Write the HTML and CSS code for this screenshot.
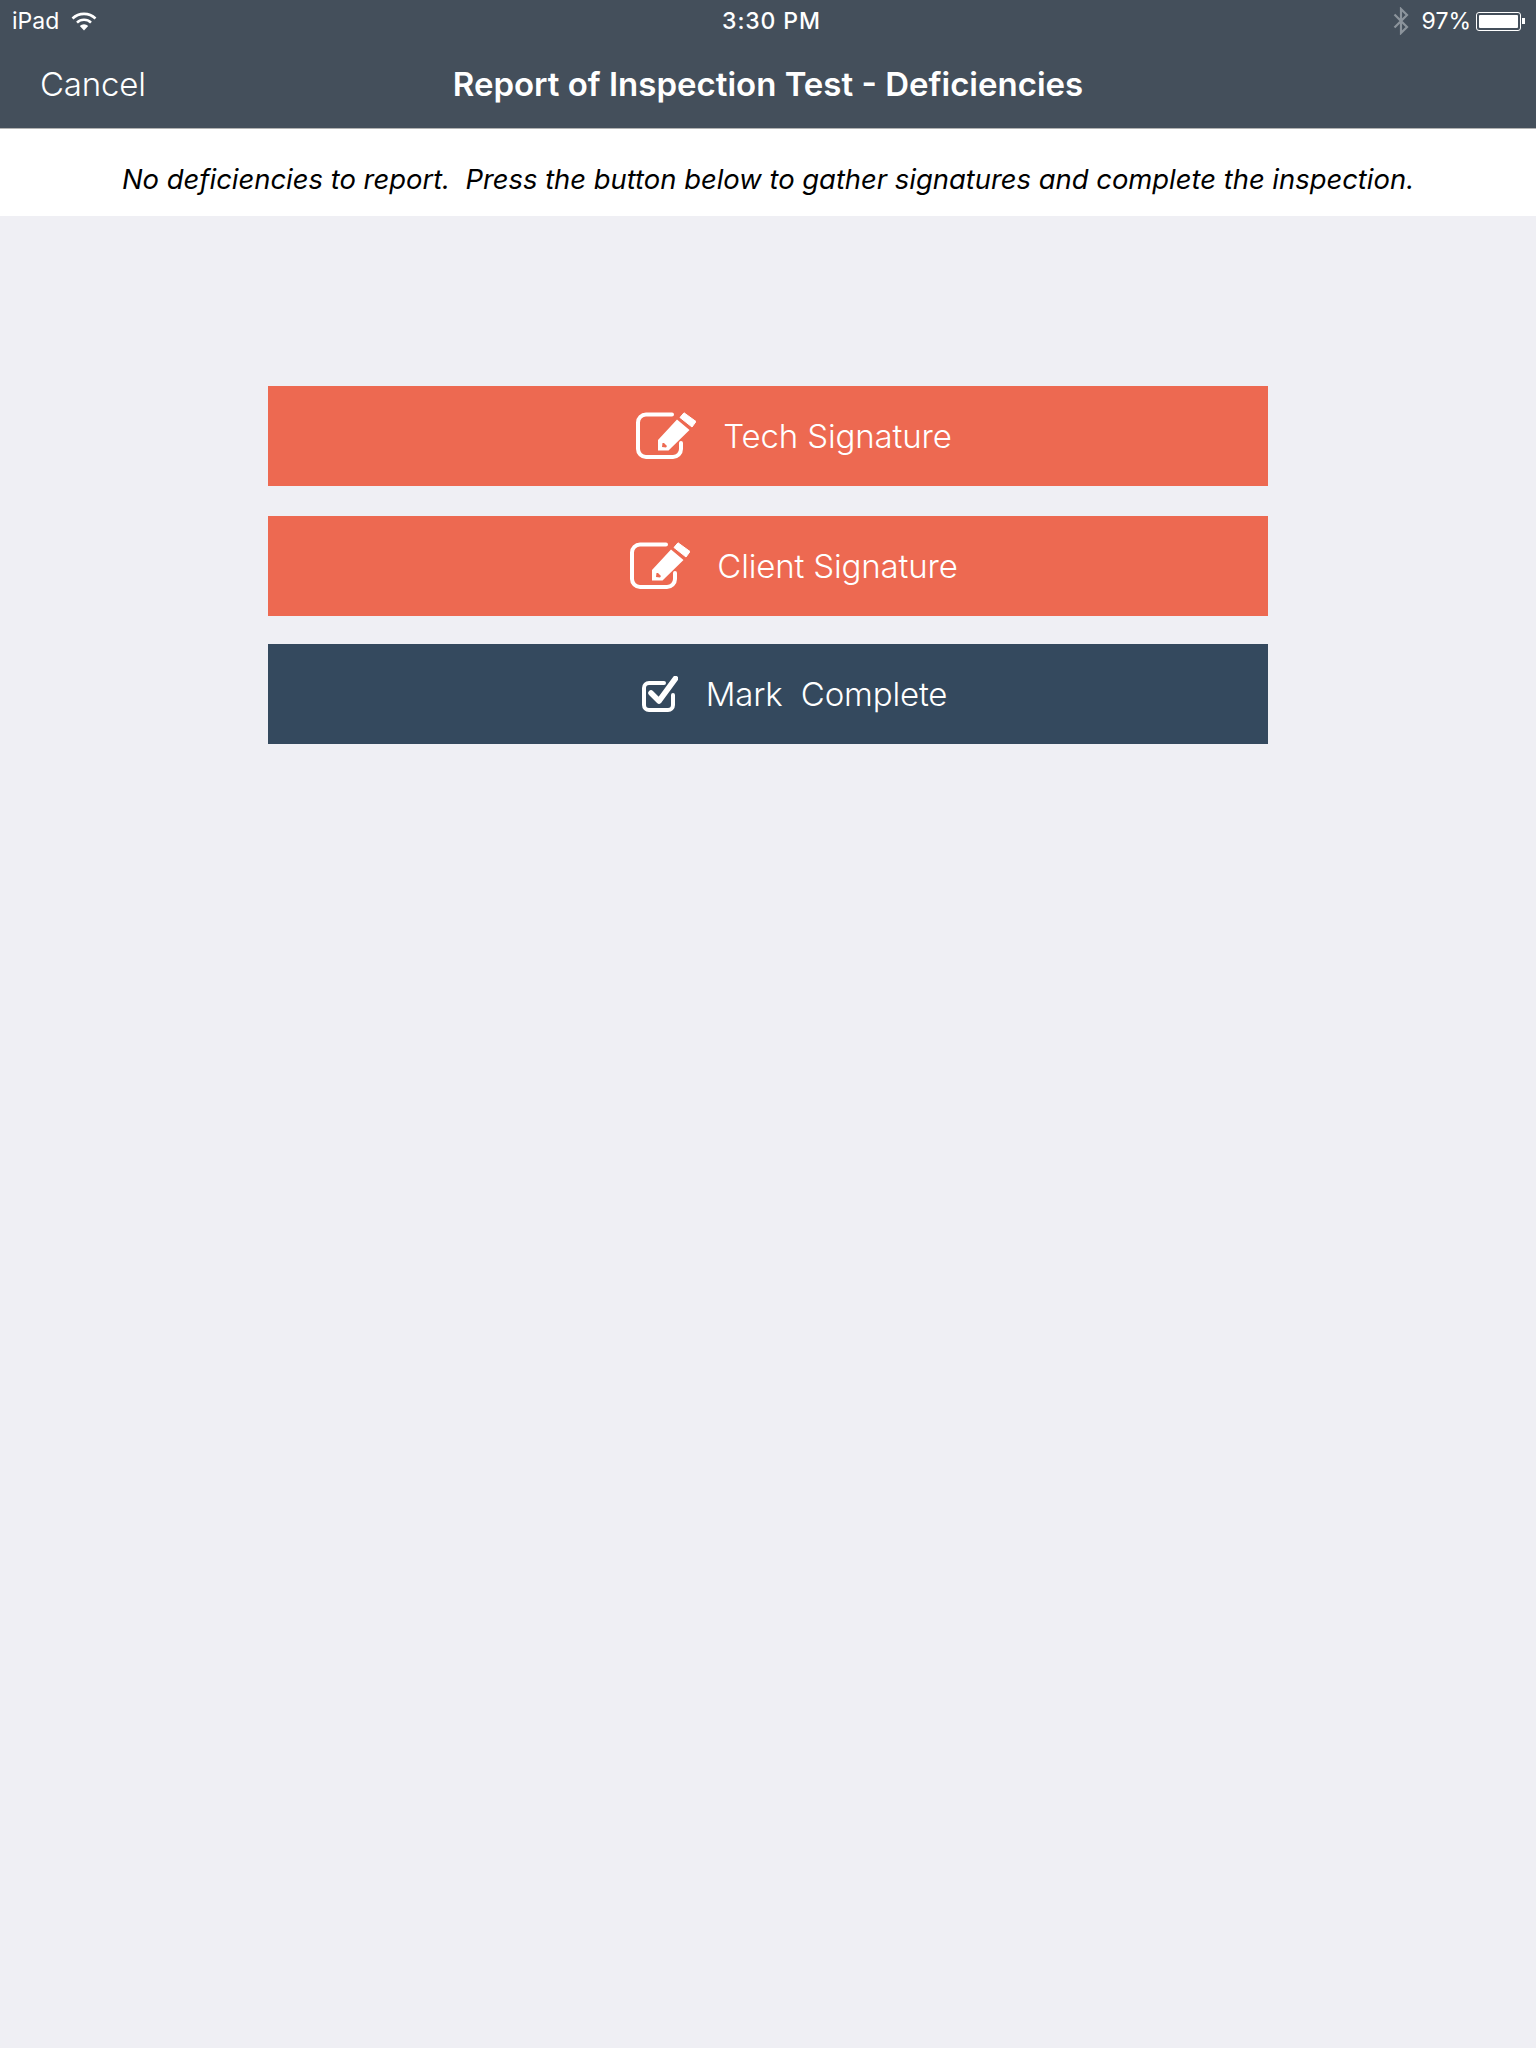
FILE: index.html
```html
<!DOCTYPE html>
<html>
<head>
<title>Report of Inspection Test - Deficiencies</title>
<link rel="stylesheet" href="styles.css">
</head>
<body>

<header class="topbar">
  <div class="status">
    <div class="status-left">
      <span>iPad</span>
      <svg class="wifi" width="26" height="20" viewBox="0 0 26 20">
        <path d="M1.500 7.500a16.500 16.500 0 0 1 23 0" fill="none" stroke="#fff" stroke-width="2.600"/>
        <path d="M6 11.600a10.200 10.200 0 0 1 14 0" fill="none" stroke="#fff" stroke-width="2.600"/>
        <path d="M8.800 15a6 6 0 0 1 8.400 0L13 19.500z" fill="#fff"/>
      </svg>
    </div>
    <div class="status-time">3:30 PM</div>
    <div class="status-right">
      <svg class="bluetooth" width="16" height="28" viewBox="0 0 16 28">
        <path d="M1.500 7.500L14 20 8 26V2l6 6L1.500 20.500" fill="none" stroke="#8c949c" stroke-width="2.200"/>
      </svg>
      <span class="battery-pct">97%</span>
      <div class="battery"><div class="battery-fill"></div></div>
      <div class="battery-cap"></div>
    </div>
  </div>
  <nav class="navbar">
    <a class="nav-cancel">Cancel</a>
    <h1 class="nav-title">Report of Inspection Test - Deficiencies</h1>
  </nav>
</header>

<p class="notice">No deficiencies to report.&nbsp; Press the button below to gather signatures and complete the inspection.</p>

<main class="actions">
  <button type="button" class="action action-sign action-tech">
    <svg class="icon-edit" width="60" height="48" viewBox="0 0 60 48">
      <path d="M36 2.500H10a8 8 0 0 0-8 8V37a8 8 0 0 0 8 8h27a8 8 0 0 0 8-8v-6" fill="none" stroke="#fff" stroke-width="4" stroke-linecap="round"/>
      <path d="M41 7.500L53.500 18 32.500 38.500 22 38.500V28zM26.500 31l-0.500 4 4 0.500 1-1.500-3-3z" fill="#fff" fill-rule="evenodd"/>
      <path d="M48 0.800L60 9.500 56 15 44 5.500z" fill="#fff" stroke="#fff" stroke-linejoin="round"/>
    </svg>
    <span>Tech Signature</span>
  </button>
  <button type="button" class="action action-sign action-client">
    <svg class="icon-edit" width="60" height="48" viewBox="0 0 60 48">
      <path d="M36 2.500H10a8 8 0 0 0-8 8V37a8 8 0 0 0 8 8h27a8 8 0 0 0 8-8v-6" fill="none" stroke="#fff" stroke-width="4" stroke-linecap="round"/>
      <path d="M41 7.500L53.500 18 32.500 38.500 22 38.500V28zM26.500 31l-0.500 4 4 0.500 1-1.500-3-3z" fill="#fff" fill-rule="evenodd"/>
      <path d="M48 0.800L60 9.500 56 15 44 5.500z" fill="#fff" stroke="#fff" stroke-linejoin="round"/>
    </svg>
    <span>Client Signature</span>
  </button>
  <button type="button" class="action action-complete">
    <svg class="icon-check" width="36" height="36" viewBox="0 0 36 36">
      <path d="M22 7H7a5 5 0 0 0-5 5v17a5 5 0 0 0 5 5h19a5 5 0 0 0 5-5V19" fill="none" stroke="#fff" stroke-width="4" stroke-linecap="round"/>
      <path d="M9 17l8 8L33.500 2.500" fill="none" stroke="#fff" stroke-width="5.500" stroke-linecap="round" stroke-linejoin="round"/>
    </svg>
    <span>Mark&nbsp; Complete</span>
  </button>
</main>

</body>
</html>
```

FILE: styles.css
```css
html, body {
  margin: 0;
  padding: 0;
}
body {
  min-height: 2048px;
  background-color: #efeff4;
  font-family: Inter, "Noto Sans", sans-serif;
}
.topbar {
  height: 128px;
  background-color: #444f5b;
  border-bottom: 1px solid #b2b2b2;
  color: #fff;
}
.status {
  display: grid;
  grid-template-columns: 1fr auto 1fr;
  align-items: center;
  height: 42px;
  padding: 0 11px 0 12px;
  font-size: 23px;
}
.status-left {
  display: flex;
  align-items: center;
  gap: 12px;
}
.status-time {
  padding-left: 6px;
  font-weight: 500;
  letter-spacing: 0.9px;
}
.status-right {
  display: flex;
  align-items: center;
  justify-content: flex-end;
}
.bluetooth {
  margin-right: 13px;
}
.battery-pct {
  margin-right: 5px;
}
.battery {
  box-sizing: border-box;
  width: 45px;
  height: 19px;
  padding: 2px;
  border: 1px solid #fff;
  border-radius: 3px;
}
.battery-fill {
  height: 100%;
  background-color: #fff;
  border-radius: 1px;
}
.battery-cap {
  width: 3px;
  height: 6px;
  margin-left: 1px;
  background-color: #fff;
}
.navbar {
  position: relative;
  display: flex;
  align-items: center;
  justify-content: center;
  height: 84px;
}
.nav-cancel {
  position: absolute;
  left: 40px;
  top: 22px;
  font-size: 33px;
  font-weight: 300;
  letter-spacing: -0.2px;
}
.nav-title {
  margin: 0;
  font-size: 33px;
  font-weight: 600;
}
.notice {
  height: 80px;
  margin: 0;
  padding-top: 7px;
  line-height: 87px;
  background-color: #fff;
  color: #000;
  font-size: 27.4px;
  font-style: italic;
  text-align: center;
  white-space: nowrap;
}
.actions {
  display: flex;
  flex-direction: column;
  width: 1000px;
  margin: 170px auto 0;
}
.action {
  display: flex;
  align-items: center;
  justify-content: center;
  height: 100px;
  padding: 0 0 0 52px;
  border: none;
  color: #fff;
  font-family: inherit;
  font-size: 33px;
  font-weight: 340;
  letter-spacing: -0.15px;
}
.action-sign {
  background-color: #ed6951;
  gap: 27px;
}
.action-client {
  margin-top: 30px;
}
.action-complete {
  margin-top: 28px;
  padding-left: 53px;
  background-color: #34495e;
  gap: 28px;
}
```
